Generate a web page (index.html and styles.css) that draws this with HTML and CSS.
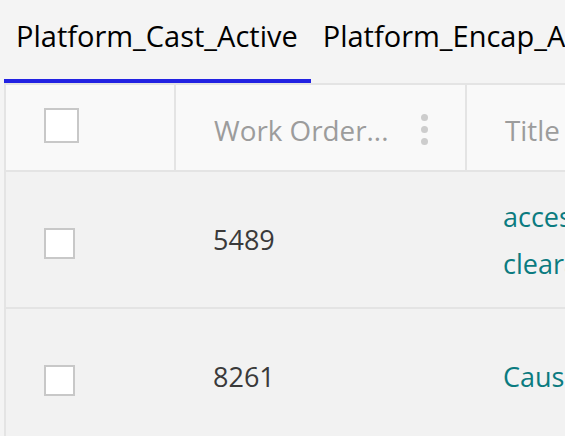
FILE: index.html
```html
<!DOCTYPE html>
<html>
<head>
<meta charset="utf-8">
<link rel="stylesheet" href="styles.css">
</head>
<body>
<div class="page">
  <div class="tabs">
    <div class="tab active">Platform_Cast_Active</div>
    <div class="tab">Platform_Encap_Active</div>
  </div>
  <div class="grid">
    <div class="row head">
      <div class="cell c-check"><span class="box big"></span></div>
      <div class="cell c-wo">
        <span class="head-label">Work Order...</span>
        <span class="kebab"><i></i><i></i><i></i></span>
      </div>
      <div class="cell c-title"><span class="head-label">Title</span></div>
    </div>
    <div class="row body">
      <div class="cell c-check"><span class="box"></span></div>
      <div class="cell c-wo"><span class="num">5489</span></div>
      <div class="cell c-title"><span class="link wrap">access clearance</span></div>
    </div>
    <div class="row body">
      <div class="cell c-check"><span class="box"></span></div>
      <div class="cell c-wo"><span class="num">8261</span></div>
      <div class="cell c-title"><span class="link">Cause analysis</span></div>
    </div>
  </div>
</div>
</body>
</html>
```

FILE: styles.css
```css
html, body {
  margin: 0;
  padding: 0;
  overflow: hidden;
  background: #f4f4f4;
}
.page {
  width: 565px;
  height: 436px;
  overflow: hidden;
  font-family: "Open Sans", "Noto Sans", sans-serif;
}
.tabs {
  display: flex;
  padding-left: 4px;
  height: 83px;
  white-space: nowrap;
}
.tab {
  box-sizing: border-box;
  height: 83px;
  padding: 0 13px 9px 12px;
  display: flex;
  align-items: center;
  font-size: 29px;
  color: #000;
  border-bottom: 4px solid transparent;
}
.tab.active {
  border-bottom-color: #2222e2;
}
.grid {
  margin-left: 4px;
  border-left: 2px solid #e4e4e4;
  border-top: 2px solid #e4e4e4;
  width: 900px;
}
.row {
  display: grid;
  grid-template-columns: 170px 291px 1fr;
  border-bottom: 2px solid #e4e4e4;
}
.row.head {
  height: 85px;
  background: #f9f9f9;
}
.row.body {
  height: 135px;
  background: #f2f2f2;
}
.cell {
  display: flex;
  align-items: center;
  box-sizing: border-box;
}
.head .c-check, .head .c-wo {
  border-right: 2px solid #e4e4e4;
}
.c-check {
  padding-left: 38px;
}
.box {
  display: block;
  box-sizing: border-box;
  width: 31px;
  height: 31px;
  border: 2px solid #c8c8c8;
  background: #fff;
  margin-top: 8px;
}
.box.big {
  width: 35px;
  height: 35px;
  margin-top: -4px;
}
.c-wo {
  padding-left: 37px;
}
.head .c-wo {
  padding-left: 38px;
}
.c-title {
  padding-left: 36px;
}
.head .c-title {
  padding-left: 38px;
}
.head-label {
  font-size: 27.8px;
  color: #9c9c9c;
  margin-top: 4px;
  white-space: nowrap;
}
.kebab {
  display: flex;
  flex-direction: column;
  gap: 5px;
  margin-left: 33px;
  margin-top: 4px;
}
.kebab i {
  display: block;
  width: 7px;
  height: 7px;
  border-radius: 50%;
  background: #cdcdcd;
}
.num {
  font-size: 27px;
  color: #3a3a3a;
}
.link {
  font-size: 27px;
  line-height: 47px;
  color: #0b7b80;
  display: block;
  white-space: nowrap;
}
.link.wrap {
  white-space: normal;
  width: min-content;
}
```
